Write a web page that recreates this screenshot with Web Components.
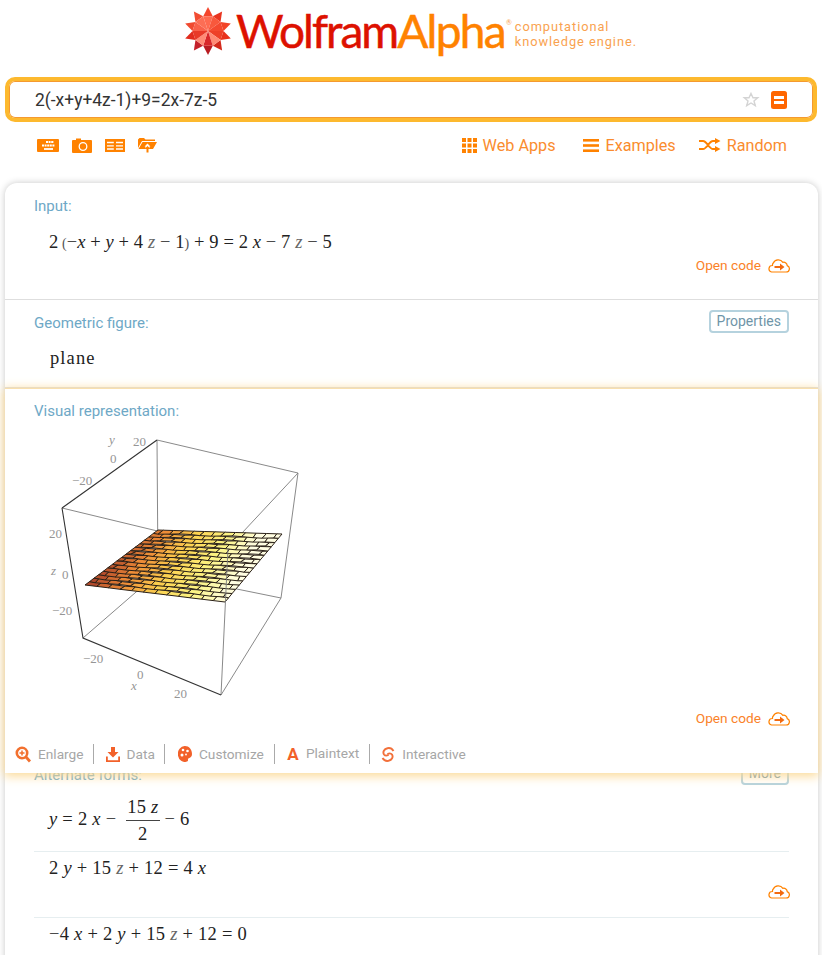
<!DOCTYPE html>
<html lang="en">
<head>
<meta charset="utf-8">
<title>WolframAlpha</title>
<style>
    html, body { margin: 0; height: 955px; overflow: hidden; background: #fff; }
    body { font-family: Roboto, "Liberation Sans", sans-serif; }
</style>
</head>
<body>
<wa-logo></wa-logo>
<wa-search value="2(-x+y+4z-1)+9=2x-7z-5"></wa-search>
<wa-toolbar></wa-toolbar>
<wa-results>
    <wa-pod label="Input:" style="height:117px">
        <wa-math style="margin-top:16px;letter-spacing:.1px"><span>2</span><small>&nbsp;(</small>−<i>x</i> + <i>y</i> + 4 <i class="z">z</i> − 1<small>)</small> + 9 = 2 <i>x</i> − 7 <i class="z">z</i> − 5</wa-math>
        <wa-open-code label="Open code" style="margin-top:1px"></wa-open-code>
    </wa-pod>
    <wa-pod label="Geometric figure:" button="Properties" style="height:88px">
        <wa-math style="margin-top:14px;letter-spacing:1.1px;padding-left:16px">plane</wa-math>
    </wa-pod>
    <wa-pod label="Visual representation:" highlight style="height:385px">
        <wa-plot></wa-plot>
        <wa-open-code label="Open code"></wa-open-code>
        <wa-actions></wa-actions>
    </wa-pod>
    <wa-pod label="Alternate forms:" button="More" style="margin-top:-21px;border:0">
        <wa-row style="height:61px;margin-top:5px"><wa-math><i>y</i> = 2 <i>x</i> − <wa-frac><span slot="num">15 <i class="z">z</i></span><span slot="den">2</span></wa-frac> − 6</wa-math></wa-row>
        <wa-row style="height:66px;padding-top:5px;box-sizing:border-box;display:block"><wa-math>2 <i>y</i> + 15 <i class="z">z</i> + 12 = 4 <i>x</i></wa-math><wa-open-code style="margin-top:3px"></wa-open-code></wa-row>
        <wa-row style="height:40px;border:0;padding-top:5px;box-sizing:border-box;display:block"><wa-math>−4 <i>x</i> + 2 <i>y</i> + 15 <i class="z">z</i> + 12 = 0</wa-math></wa-row>
    </wa-pod>
</wa-results>

<script>
const orange = "#ff8200";

// star from the logo, faceted triangles around a light centre
function starSvg() {
    const pt = (r, k) => {
        const a = (k * 36 - 90) * Math.PI / 180;
        return (r * Math.cos(a)).toFixed(2) + "," + (r * Math.sin(a)).toFixed(2);
    };
    const outer = ["#f4452c", "#e9341f", "#f24428", "#e8321c", "#d42a1c", "#b91c22", "#c4202a", "#e12c1e", "#f04a30", "#f24c32"];
    const inner = ["#ff6a50", "#f8583c", "#f4492f", "#ee4028", "#ff8b76", "#d8282a", "#ff8b76", "#e83a28", "#f9614a", "#fc6e55"];
    let out = "";
    for (let k = 0; k < 10; k++) {
        out += `<polygon fill="${outer[k]}" points="${pt(15.5, k - .5)} ${pt(24, k)} ${pt(15.5, k + .5)}"/>`;
        out += `<polygon fill="${inner[k]}" points="0,0 ${pt(15.5, k - .5)} ${pt(15.5, k + .5)}"/>`;
    }
    return `<svg width="48" height="48" viewBox="-24 -24 48 48">${out}</svg>`;
}

const logoTemplate = document.createElement("template");
logoTemplate.innerHTML = /*html*/`
    <style>
        :host { display: flex; justify-content: center; height: 77px; box-sizing: border-box; padding: 7px 1px 0 0; }
        .word { font: 400 46px/46px Lato, "Open Sans", sans-serif; margin: 1px 0 0 4px; letter-spacing: -2px; -webkit-text-stroke: .5px; color: #dd1100; white-space: nowrap; }
        .word b { font-weight: 400; letter-spacing: -1.7px; color: ${orange}; }
        .word sup { font-size: 7px; line-height: 0; letter-spacing: 0; -webkit-text-stroke: 0; vertical-align: 23px; color: #f9a24f; margin-left: 1px; }
        .tag { font: 400 12.8px/15px Roboto, sans-serif; letter-spacing: .95px; color: #f9a24f; margin: 12px 0 0 3px; white-space: nowrap; }
    </style>
    ${starSvg()}
    <div class="word">Wolfram<b>Alpha</b><sup>®</sup></div>
    <div class="tag">computational<br>knowledge engine.</div>
`;
class WaLogo extends HTMLElement {
    constructor() {
        super();
        this.attachShadow({mode: "open"}).append(logoTemplate.content.cloneNode(true));
    }
}
customElements.define("wa-logo", WaLogo);

const searchTemplate = document.createElement("template");
searchTemplate.innerHTML = /*html*/`
    <style>
        :host { display: block; margin: 0 5px; }
        .box {
            height: 45px; box-sizing: border-box;
            border: 4px solid #fdb92e; border-radius: 10px;
            box-shadow: inset 0 0 0 1px #f59a30;
            display: flex; align-items: center; gap: 11px;
            padding: 0 26px 0 26px;
            background: #fff;
            font: 400 17.45px Roboto, sans-serif; color: #333;
        }
        .text { flex: 1; }
    </style>
    <div class="box">
        <span class="text"></span>
        <svg width="18" height="18" viewBox="0 0 18 18"><path d="M9 2.500l2 4.300h4.700l-3.700 3.100 1.300 4.800L9 12l-4.300 2.700 1.300-4.800-3.700-3.100h4.700z" fill="#fff" stroke="#d4d4d4" stroke-width="1.400"/></svg>
        <svg width="16" height="18" viewBox="0 0 16 18"><rect width="16" height="18" rx="2.500" fill="#ff6600"/><rect x="3" y="5" width="10" height="3" fill="#fff"/><rect x="3" y="10" width="10" height="3" fill="#fff"/></svg>
    </div>
`;
class WaSearch extends HTMLElement {
    constructor() {
        super();
        this.attachShadow({mode: "open"}).append(searchTemplate.content.cloneNode(true));
    }
    connectedCallback() {
        this.shadowRoot.querySelector(".text").textContent = this.getAttribute("value");
    }
}
customElements.define("wa-search", WaSearch);

const toolbarTemplate = document.createElement("template");
toolbarTemplate.innerHTML = /*html*/`
    <style>
        :host { display: flex; align-items: center; height: 46px; margin-top: 0; padding: 0 35px 0 37px; box-sizing: border-box; color: #fa8c2e; font: 400 16.2px Roboto, sans-serif; }
        svg { display: block; }
        .left { display: flex; align-items: center; gap: 13px; flex: 1; }
        .link { display: flex; align-items: center; gap: 6px; margin-left: 27px; }
    </style>
    <div class="left">
        <svg width="22" height="13" viewBox="0 0 22 13"><rect width="22" height="13" rx="1" fill="${orange}"/><path d="M9 3h8M5 6.500h13" stroke="#fff" stroke-width="1.800" stroke-dasharray="2 .6" fill="none"/><path d="M7 10h9" stroke="#fff" stroke-width="1.800"/></svg>
        <svg width="20" height="15" viewBox="0 0 20 15"><path d="M1 2h3V.5h5V2h10a1 1 0 0 1 1 1v11a1 1 0 0 1-1 1H1a1 1 0 0 1-1-1V3a1 1 0 0 1 1-1z" fill="${orange}"/><circle cx="11" cy="8.500" r="3.800" fill="none" stroke="#fff" stroke-width="1.300"/></svg>
        <svg width="20" height="13" viewBox="0 0 20 13"><rect width="20" height="13" fill="${orange}"/><path d="M2 3.500h6.800M11 3.500h7M2 6.800h6.800M11 6.800h7M2 10h6.800M11 10h7" stroke="#fff" stroke-width="1.300"/></svg>
        <svg width="19" height="16" viewBox="0 0 19 16"><path d="M0 11V2.500L1.500 1H6l1.500 1.500H17V4H4L0 11z" fill="${orange}"/><path d="M4.500 5H19l-4 7h-3.500V9.500h1L9.500 6.500l-3 3h1V12H0.500z" fill="${orange}"/><path d="M9.500 9l3 3h-2v3.500h-2V12h-2z" fill="${orange}"/></svg>
    </div>
    <div class="link"><svg width="15" height="15" viewBox="0 0 15 15" fill="${orange}"><rect width="4" height="4"/><rect x="5.500" width="4" height="4"/><rect x="11" width="4" height="4"/><rect y="5.500" width="4" height="4"/><rect x="5.500" y="5.500" width="4" height="4"/><rect x="11" y="5.500" width="4" height="4"/><rect y="11" width="4" height="4"/><rect x="5.500" y="11" width="4" height="4"/><rect x="11" y="11" width="4" height="4"/></svg>Web Apps</div>
    <div class="link" style="gap:7px"><svg width="16" height="13" viewBox="0 0 16 13" fill="${orange}"><rect width="16" height="2.600"/><rect y="5.200" width="16" height="2.600"/><rect y="10.400" width="16" height="2.600"/></svg>Examples</div>
    <div class="link" style="margin-left:23px"><svg width="22" height="14" viewBox="0 0 22 14" fill="none" stroke="${orange}" stroke-width="2"><path d="M0 3h4c4 0 6 8 10 8h3M0 11h4c4 0 6-8 10-8h3"/><path d="M16 0l5.500 3L16 6zM16 8l5.500 3-5.500 3z" fill="${orange}" stroke="none"/></svg>Random</div>
`;
class WaToolbar extends HTMLElement {
    constructor() {
        super();
        this.attachShadow({mode: "open"}).append(toolbarTemplate.content.cloneNode(true));
    }
}
customElements.define("wa-toolbar", WaToolbar);

const resultsTemplate = document.createElement("template");
resultsTemplate.innerHTML = /*html*/`
    <style>
        :host {
            display: block; margin: 15px 4px 0 5px; height: 800px;
            background: #fff; border-radius: 12px 12px 0 0;
            box-shadow: 0 0 7px rgba(0,0,0,.22);
        }
    </style>
    <slot></slot>
`;
class WaResults extends HTMLElement {
    constructor() {
        super();
        this.attachShadow({mode: "open"}).append(resultsTemplate.content.cloneNode(true));
    }
}
customElements.define("wa-results", WaResults);

const podTemplate = document.createElement("template");
podTemplate.innerHTML = /*html*/`
    <style>
        :host {
            display: block; box-sizing: border-box; padding: 14px 29px 0 29px;
            border-bottom: 1px solid #dedede;
            font: 400 15px Roboto, sans-serif; color: #333;
        }
        :host([highlight]) {
            position: relative; z-index: 1;
            background: #fff; border: 1px solid #f8dfae; border-width: 1px 0 0 0;
            box-shadow: 0 2px 10px 1px #fbd995;
            margin: 0; padding-top: 13px;
        }
        .head { display: flex; justify-content: space-between; align-items: flex-start; min-height: 18px; line-height: 18px; color: #6ea8c6; }
        button {
            font: 400 14px Roboto, sans-serif; color: #6f95a8; background: #fff;
            border: 2px solid #b5d2de; border-radius: 4px; height: 23px; padding: 0 6px; margin-top: -4px;
            line-height: 17px;
        }
    </style>
    <div class="head"><span class="label"></span></div>
    <slot></slot>
`;
class WaPod extends HTMLElement {
    constructor() {
        super();
        this.attachShadow({mode: "open"}).append(podTemplate.content.cloneNode(true));
    }
    connectedCallback() {
        this.shadowRoot.querySelector(".label").textContent = this.getAttribute("label");
        if (this.hasAttribute("button")) {
            const b = document.createElement("button");
            b.textContent = this.getAttribute("button");
            this.shadowRoot.querySelector(".head").append(b);
        }
    }
}
customElements.define("wa-pod", WaPod);

const mathTemplate = document.createElement("template");
mathTemplate.innerHTML = /*html*/`
    <style>
        :host { display: flex; align-items: center; white-space: pre-wrap; padding-left: 15px; letter-spacing: .25px; font: 400 18.5px/22px "Liberation Serif", serif; color: #222; }
        ::slotted(i.z) { color: #666; }
        ::slotted(small) { font-size: 14px; color: #555; }
        .wrap { display: block; }
    </style>
    <span class="wrap"><slot></slot></span>
`;
class WaMath extends HTMLElement {
    constructor() {
        super();
        this.attachShadow({mode: "open"}).append(mathTemplate.content.cloneNode(true));
    }
}
customElements.define("wa-math", WaMath);

const fracTemplate = document.createElement("template");
fracTemplate.innerHTML = /*html*/`
    <style>
        :host { display: inline-flex; flex-direction: column; align-items: center; vertical-align: middle; margin: 0 0 0 5px; line-height: 22px; }
        .num { border-bottom: 1px solid #444; padding: 0 1px 2px; }
        .den { padding-top: 2px; }
    </style>
    <span class="num"><slot name="num"></slot></span>
    <span class="den"><slot name="den"></slot></span>
`;
class WaFrac extends HTMLElement {
    constructor() {
        super();
        this.attachShadow({mode: "open"}).append(fracTemplate.content.cloneNode(true));
    }
}
customElements.define("wa-frac", WaFrac);

const rowTemplate = document.createElement("template");
rowTemplate.innerHTML = /*html*/`
    <style>
        :host { display: flex; align-items: center; border-bottom: 1px solid #e6eef0; }
    </style>
    <slot></slot>
`;
class WaRow extends HTMLElement {
    constructor() {
        super();
        this.attachShadow({mode: "open"}).append(rowTemplate.content.cloneNode(true));
    }
}
customElements.define("wa-row", WaRow);

const openTemplate = document.createElement("template");
openTemplate.innerHTML = /*html*/`
    <style>
        :host { display: flex; justify-content: flex-end; align-items: center; gap: 6px; height: 18px; margin-right: -1px; color: #fa8228; font: 400 13.7px Roboto, sans-serif; }
        svg { display: block; }
    </style>
    <span class="label"></span>
    <svg width="23" height="15" viewBox="0 0 23 15">
        <path d="M4.500 14H19a3.300 3.300 0 0 0 1.200-6.400 3.500 3.500 0 0 0-4.300-3.300A5.500 5.500 0 0 0 6.300 5a2.800 2.800 0 0 0-.8 2.500A3.300 3.300 0 0 0 4.500 14z" fill="none" stroke="${orange}" stroke-width="1.200"/>
        <path d="M7.500 8h5.500V5.500L17.500 9 13 12.500V10H7.500z" fill="#f26a10"/>
    </svg>
`;
class WaOpenCode extends HTMLElement {
    constructor() {
        super();
        const root = this.attachShadow({mode: "open"});
        root.append(openTemplate.content.cloneNode(true));
    }
    connectedCallback() {
        this.shadowRoot.querySelector(".label").textContent = this.getAttribute("label") || "";
    }
}
customElements.define("wa-open-code", WaOpenCode);

// 3D plot: box edges, tick labels, and a meshed plane laid like bricks
function plotSvg() {
    const nu = 16, nv = 12;
    const B = [128, 105], R = [252, 109], F = [195, 177], L = [55, 160];
    const at = (u, v) => [0, 1].map(d =>
        (1 - u) * (1 - v) * L[d] + u * (1 - v) * B[d] + u * v * R[d] + (1 - u) * v * F[d]);
    const mix = (a, b, t) => a.map((c, i) => Math.round(c + (b[i] - c) * t));
    const stops = [[165, 60, 40], [238, 140, 55], [252, 210, 80], [252, 243, 130], [255, 253, 225]];
    const colour = s => {
        const p = Math.min(.999, Math.max(0, s)) * (stops.length - 1), i = Math.floor(p);
        return "rgb(" + mix(stops[i], stops[i + 1], p - i).join(",") + ")";
    };
    // rough mesh inside, straight along the outer edge of the plane
    const wob = (a, b) => {
        const p = at(a, b);
        const edge = a <= 0 || a >= 1 || b <= 0 || b >= 1;
        const k = edge ? 0 : .6;
        return (p[0] + Math.sin(a * 71 + b * 37) * k).toFixed(1) + "," + (p[1] + Math.cos(a * 43 + b * 91) * k).toFixed(1);
    };
    let cells = "";
    for (let i = 0; i < nu; i++) {
        const shift = i % 2 ? .5 : 0;
        for (let j = -1; j < nv; j++) {
            const u0 = i / nu, u1 = (i + 1) / nu;
            const v0 = Math.max(0, (j + shift) / nv), v1 = Math.min(1, (j + 1 + shift) / nv);
            if (v1 <= v0) continue;
            const s = (v0 + v1) / 2 + u0 * .18;
            cells += `<polygon fill="${colour(s)}" points="${wob(u0, v0)} ${wob(u1, v0)} ${wob(u1, v1)} ${wob(u0, v1)}"/>`;
        }
    }
    const label = (x, y, t, it) => `<text x="${x}" y="${y}"${it ? ' font-style="italic"' : ""}>${t}</text>`;
    return `<svg width="280" height="285" viewBox="0 0 280 285">
        <g fill="none" stroke="#7c7c7c" stroke-width=".9">
            <path d="M127 15L268 48M32 83L198 123M268 48L198 123M127 15L128 148M268 48L251 173M191 270L251 173M53 213L128 148M128 148L251 173"/>
        </g>
        <g stroke="#2a2017" stroke-width="1" stroke-linejoin="round">${cells}</g>
        <g fill="none" stroke="#7c7c7c" stroke-width=".9"><path d="M198 123L191 270"/></g>
        <g fill="none" stroke="#333" stroke-width="1.100"><path d="M32 83L127 15M32 83L53 213L191 270"/></g>
        <g font-family="'Liberation Serif', serif" font-size="13" fill="#959595">
            ${label(79, 19, "y", true)}${label(103, 21, "20")}${label(80, 38, "0")}${label(42, 60, "−20")}
            ${label(19, 113, "20")}${label(21, 150, "z", true)}${label(32, 154, "0")}${label(22, 190, "−20")}
            ${label(53, 238, "−20")}${label(107, 254, "0")}${label(101, 265, "x", true)}${label(144, 273, "20")}
        </g>
    </svg>`;
}

const plotTemplate = document.createElement("template");
plotTemplate.innerHTML = /*html*/`
    <style>
        :host { display: block; margin: 5px 0 0 -4px; height: 284px; }
        svg { display: block; }
    </style>
    ${plotSvg()}
`;
class WaPlot extends HTMLElement {
    constructor() {
        super();
        this.attachShadow({mode: "open"}).append(plotTemplate.content.cloneNode(true));
    }
}
customElements.define("wa-plot", WaPlot);

const actionsTemplate = document.createElement("template");
actionsTemplate.innerHTML = /*html*/`
    <style>
        :host { display: flex; align-items: center; height: 20px; margin: 17px 0 0 -19px; color: #a6a6a6; font: 400 13.7px Roboto, sans-serif; }
        .item { display: flex; align-items: center; gap: 7px; padding: 0 9px 0 12px; height: 20px; border-right: 1px solid #aaa; }
        .item:first-of-type { padding-left: 0; }
        .item:last-child { border: 0; }
        svg { display: block; }
        .a { font: 700 17px/17px Roboto, sans-serif; color: #f2612a; width: 12px; text-align: center; }
    </style>
    <div class="item"><svg width="16" height="17" viewBox="0 0 16 17"><circle cx="7" cy="7" r="5.200" fill="#fff" stroke="#f2702e" stroke-width="2.600"/><path d="M4.500 7h5M7 4.500v5" stroke="#f2702e" stroke-width="1.500"/><path d="M11 11l4 4.500" stroke="#f2702e" stroke-width="2.800"/></svg>Enlarge</div>
    <div class="item"><svg width="14" height="15" viewBox="0 0 14 15" fill="#f2612a"><path d="M5 0h4v5h3.500L7 10.500 1.500 5H5z"/><path d="M0 9.500h1.800v3.700h10.400V9.500H14V15H0z"/></svg>Data</div>
    <div class="item" style="padding:0 10px 0 13px"><svg width="14" height="16" viewBox="0 0 14 16"><path d="M7 0a7 8 0 1 0 2 15.600c2-.6 0-2.600 1.800-3.400 2.400-1 3.200-2 3.200-4.200C14 3.500 11 0 7 0z" fill="#f2612a"/><circle cx="5" cy="4" r="1.300" fill="#fff"/><circle cx="9.500" cy="5" r="1.300" fill="#fff"/><circle cx="4" cy="9" r="1.500" fill="#fff"/><circle cx="8" cy="8.500" r=".9" fill="#fff"/></svg>Customize</div>
    <div class="item" style="padding-right:10px"><span class="a">A</span><span style="margin-top:-3px">Plaintext</span></div>
    <div class="item" style="padding-left:11px"><svg width="14" height="15" viewBox="0 0 14 15" fill="none" stroke="#f2703a" stroke-width="1.900"><path d="M12.500 4C11 1.500 8.500 .8 6.500 1.200 3 2 1.500 5 3 7.500 4 9 7 9 7.500 7.500"/><path d="M1.500 11C3 13.500 5.500 14.200 7.500 13.800 11 13 12.500 10 11 7.500 10 6 7 6 6.500 7.500"/></svg>Interactive</div>
`;
class WaActions extends HTMLElement {
    constructor() {
        super();
        this.attachShadow({mode: "open"}).append(actionsTemplate.content.cloneNode(true));
    }
}
customElements.define("wa-actions", WaActions);
</script>
</body>
</html>
